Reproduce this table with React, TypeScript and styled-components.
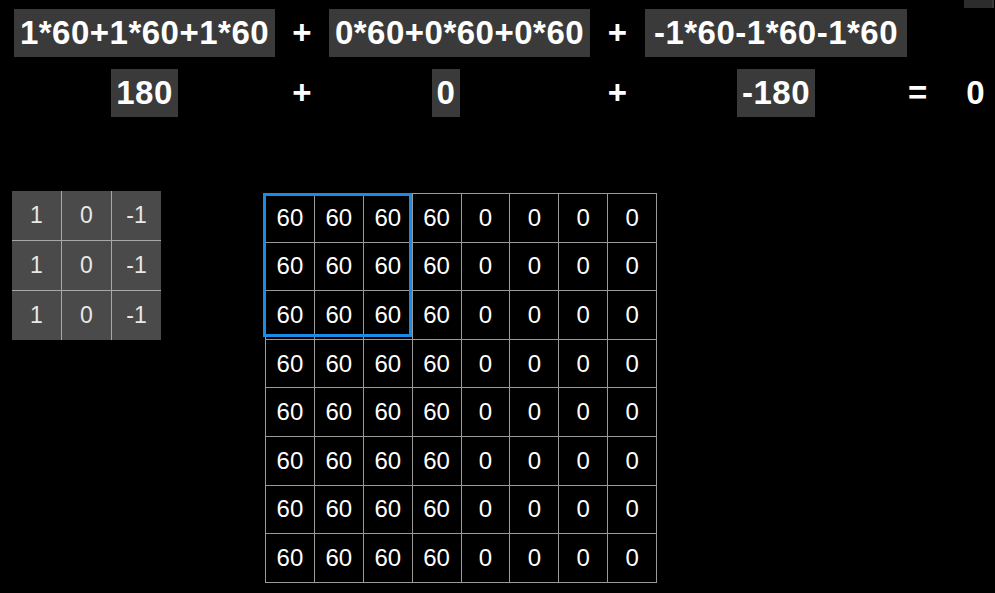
import { styled, createGlobalStyle } from 'styled-components';

const kernel = [
  ['1', '0', '-1'],
  ['1', '0', '-1'],
  ['1', '0', '-1'],
];

const image = Array.from({ length: 8 }, () => ['60', '60', '60', '60', '0', '0', '0', '0']);

const App = () => {
  return (
    <Page>
      <GlobalStyle />
      <Corner />
      <Equations>
        <Term>1*60+1*60+1*60</Term>
        <Op>+</Op>
        <Term>0*60+0*60+0*60</Term>
        <Op>+</Op>
        <Term>-1*60-1*60-1*60</Term>
        <span />

        <Term $center>180</Term>
        <Op>+</Op>
        <Term $center $shift={27}>0</Term>
        <Op>+</Op>
        <Term $center>-180</Term>
        <Result>
          <Op>=</Op>
          <Op>0</Op>
        </Result>
      </Equations>

      <Board>
        <Kernel>
          {kernel.flat().map((v, i) => (
            <KernelCell key={i}>{v}</KernelCell>
          ))}
        </Kernel>
        <ImageWrap>
          <ImageGrid>
            {image.flat().map((v, i) => (
              <ImageCell key={i}>{v}</ImageCell>
            ))}
          </ImageGrid>
          <Window />
        </ImageWrap>
      </Board>
    </Page>
  );
};

export default App;

const GlobalStyle = createGlobalStyle`
  html, body {
    margin: 0;
    padding: 0;
    background: #000;
  }
  body {
    font-family: "Liberation Sans", Arial, sans-serif;
  }
`;

const Page = styled.div`
  position: relative;
  width: 995px;
  height: 593px;
  background: #000;
  color: #fff;
  overflow: hidden;
`;

const Corner = styled.div`
  position: absolute;
  top: 0;
  right: 1px;
  width: 28px;
  height: 8px;
  background: #2c2c2c;
  border-right: 2px solid #3a3a3a;
`;

const Equations = styled.div`
  display: grid;
  grid-template-columns: 261px 54px 261px 55px 262px auto;
  row-gap: 12px;
  padding: 9px 0 0 14px;
  align-items: center;
`;

const Term = styled.div<{ $center?: boolean; $shift?: number }>`
  justify-self: ${(p) => (p.$center ? 'center' : 'stretch')};
  margin-right: ${(p) => p.$shift ?? 0}px;
  height: 48px;
  line-height: 48px;
  padding: 0 5px;
  background: #3a3a3a;
  font-size: 33px;
  font-weight: bold;
  letter-spacing: 0.5px;
  white-space: nowrap;
  text-align: center;
`;

const Op = styled.div`
  justify-self: center;
  font-size: 33px;
  font-weight: bold;
  line-height: 48px;
`;

const Result = styled.div`
  display: flex;
  gap: 39px;
  padding-left: 1px;
`;

const Board = styled.div`
  display: flex;
  align-items: flex-start;
  gap: 104px;
  margin-top: 74px;
  padding-left: 12px;
`;

const Kernel = styled.div`
  display: grid;
  grid-template-columns: repeat(3, 49px);
  grid-auto-rows: 49px;
  gap: 1px;
  background: #a8a8a8;
`;

const KernelCell = styled.div`
  display: flex;
  align-items: center;
  justify-content: center;
  background: #4a4a4a;
  color: #e8e8e8;
  font-size: 23px;
`;

const ImageWrap = styled.div`
  position: relative;
  margin-top: 2px;
`;

const ImageGrid = styled.div`
  display: grid;
  grid-template-columns: repeat(8, 47.9px);
  grid-auto-rows: 47.6px;
  gap: 1px;
  padding: 1px;
  background: #9a9a9a;
`;

const ImageCell = styled.div`
  display: flex;
  align-items: center;
  justify-content: center;
  background: #000;
  color: #fff;
  font-size: 24px;
`;

const Window = styled.div`
  position: absolute;
  left: -2px;
  top: 0;
  width: 149px;
  height: 144px;
  box-sizing: border-box;
  border: 3px solid #1a8ce8;
  pointer-events: none;
`;
